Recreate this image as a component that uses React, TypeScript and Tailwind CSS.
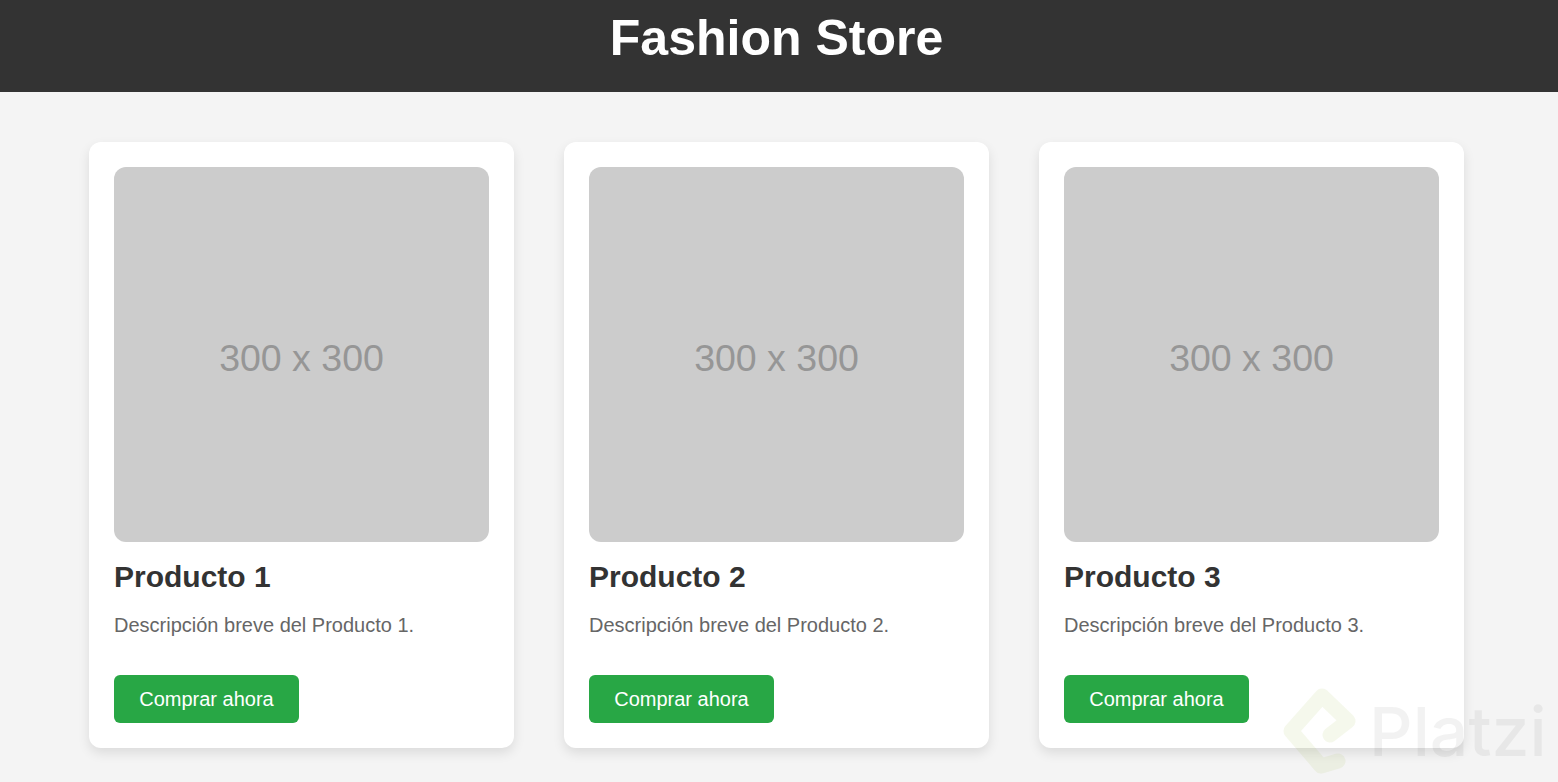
const products = [1, 2, 3];

const ProductCard = ({ id }: { id: number }) => (
  <div className="w-[425px] h-[606px] p-[25px] bg-white rounded-[12px] shadow-[0_5px_12px_rgba(0,0,0,0.1)]">
    <div className="w-[375px] h-[375px] rounded-[12px] bg-[#cccccc] flex items-center justify-center">
      <span className="text-[37.5px] text-[#969696] leading-none mt-[8px]">300 x 300</span>
    </div>
    <h2 className="mt-[16px] text-[30px] leading-[38px] font-bold text-[#333333]">Producto {id}</h2>
    <p className="mt-[17px] text-[20px] leading-[24px] text-[#666666]">Descripción breve del Producto {id}.</p>
    <button className="mt-[38px] h-[48px] w-[185px] rounded-[6px] bg-[#28a745] text-white text-[20px] flex items-center justify-center">
      Comprar ahora
    </button>
  </div>
);

export default function App() {
  return (
    <div className="relative h-[782px] overflow-hidden bg-[#f4f4f4] font-['Liberation_Sans',Arial,sans-serif]">
      <header className="h-[92px] pr-[5px] bg-[#333333] text-center">
        <h1 className="pt-[7px] text-[50px] leading-[62px] font-bold text-white">Fashion Store</h1>
      </header>
      <main className="pt-[50px] pr-[5px] flex justify-center gap-[50px]">
        {products.map((id) => (
          <ProductCard key={id} id={id} />
        ))}
      </main>

      {/* watermark */}
      <div className="absolute left-[1283px] top-[688px] flex items-start pointer-events-none">
        <svg width="76" height="86" viewBox="0 0 76 86" fill="none">
          <path
            d="M47 47 L65 33 L39 8 L8 43 L38 78 L55 73"
            stroke="#a0b840"
            strokeOpacity="0.1"
            strokeWidth="15"
            strokeLinecap="round"
            strokeLinejoin="round"
          />
        </svg>
        <span className="ml-[10px] mt-[3px] text-[68px] leading-[80px] font-medium text-[#000000]/[0.05] font-['Inter',sans-serif]">Platzi</span>
      </div>
    </div>
  );
}
